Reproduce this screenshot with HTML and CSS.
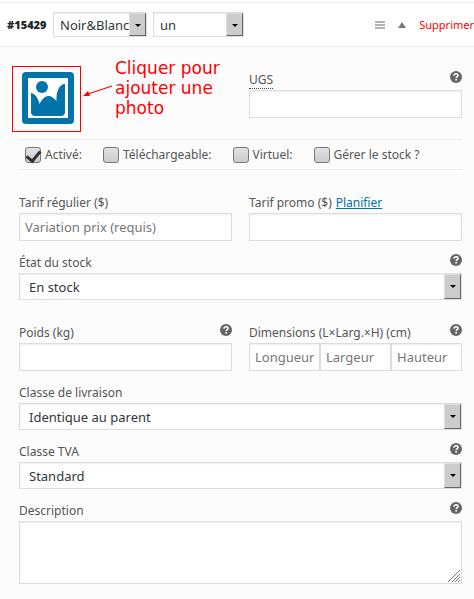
FILE: index.html
```html
<!DOCTYPE html>
<html lang="fr">

<head>
    <meta charset="UTF-8">
    <meta name="viewport" content="width=device-width, initial-scale=1.0">
    <title>Variation #15429</title>
    <link rel="stylesheet" href="styles.css">
</head>

<body>
    <svg class="sprite" aria-hidden="true">
        <symbol id="help" viewBox="0 0 12 12">
            <circle cx="6" cy="6" r="6" fill="#666"/>
            <path d="M4 4.7C4 3.3 4.9 2.8 6 2.8s2 .6 2 1.6C8 5.7 6.2 5.5 6.2 7" fill="none" stroke="#fff" stroke-width="1.5"/>
            <rect x="5.3" y="7.9" width="1.7" height="1.6" fill="#fff"/>
        </symbol>
    </svg>

    <div class="variation">
        <header class="variation-header">
            <strong>#15429</strong>
            <span class="select select-small">
                <select aria-label="Couleur">
                    <option>Noir&amp;Blanc</option>
                </select>
            </span>
            <span class="select select-small">
                <select aria-label="Quantité">
                    <option>un</option>
                </select>
            </span>
            <div class="actions">
                <svg class="icon-sort" viewBox="0 0 10 8" aria-hidden="true">
                    <path d="M0 1h10M0 4h10M0 7h10" stroke="#999" stroke-width="1.5"/>
                </svg>
                <svg class="icon-toggle" viewBox="0 0 8 6" aria-hidden="true">
                    <path d="M4 0l4 6H0z" fill="#777"/>
                </svg>
                <a class="delete" href="#">Supprimer</a>
            </div>
        </header>

        <form class="variation-data">
            <div class="row row-top">
                <div class="upload">
                    <button type="button" class="upload-btn" aria-label="Ajouter une photo">
                        <svg viewBox="0 0 52 52" aria-hidden="true">
                            <rect width="52" height="52" rx="4" fill="#0073aa"/>
                            <rect x="6" y="6" width="40" height="40" fill="#fff"/>
                            <circle cx="20" cy="15" r="6" fill="#0073aa"/>
                            <path d="M9 21c4 0 7 5 8.500 11C20 27 23 24 26.500 24c3 0 5.500 2 8 5C34 20 37 12 43 12v28q0 4-4 4H13q-4 0-4-4z" fill="#0073aa"/>
                        </svg>
                    </button>
                    <span class="frame"></span>
                    <svg class="arrow" viewBox="0 0 30 14" aria-hidden="true">
                        <path d="M29 2L5 10" stroke="#f00" stroke-width="1.2"/>
                        <path d="M0 12l5-5 2 5z" fill="#f00"/>
                    </svg>
                    <p class="note">Cliquer pour ajouter une photo</p>
                </div>
                <div class="field">
                    <div class="field-label">
                        <label for="sku"><abbr title="Unité de gestion de stock">UGS</abbr></label>
                        <svg class="help"><use href="#help"/></svg>
                    </div>
                    <input type="text" id="sku">
                </div>
            </div>

            <div class="options">
                <label><input type="checkbox" checked>Activé:</label>
                <label><input type="checkbox">Téléchargeable:</label>
                <label><input type="checkbox">Virtuel:</label>
                <label><input type="checkbox">Gérer le stock ?</label>
            </div>

            <div class="row">
                <div class="field">
                    <div class="field-label"><label for="price">Tarif régulier ($)</label></div>
                    <input type="text" id="price" placeholder="Variation prix (requis)">
                </div>
                <div class="field">
                    <div class="field-label"><label for="sale">Tarif promo ($)</label><a href="#">Planifier</a></div>
                    <input type="text" id="sale">
                </div>
            </div>

            <div class="field">
                <div class="field-label">
                    <label for="stock">État du stock</label>
                    <svg class="help"><use href="#help"/></svg>
                </div>
                <span class="select">
                    <select id="stock">
                        <option>En stock</option>
                    </select>
                </span>
            </div>

            <div class="row row-shipping">
                <div class="field">
                    <div class="field-label">
                        <label for="weight">Poids (kg)</label>
                        <svg class="help"><use href="#help"/></svg>
                    </div>
                    <input type="text" id="weight">
                </div>
                <div class="field">
                    <div class="field-label">
                        <label for="length">Dimensions (L×Larg.×H) (cm)</label>
                        <svg class="help"><use href="#help"/></svg>
                    </div>
                    <div class="dimensions">
                        <input type="text" id="length" placeholder="Longueur">
                        <input type="text" aria-label="Largeur" placeholder="Largeur">
                        <input type="text" aria-label="Hauteur" placeholder="Hauteur">
                    </div>
                </div>
            </div>

            <div class="field">
                <div class="field-label"><label for="shipping">Classe de livraison</label></div>
                <span class="select">
                    <select id="shipping">
                        <option>Identique au parent</option>
                    </select>
                </span>
            </div>

            <div class="field">
                <div class="field-label">
                    <label for="tax">Classe TVA</label>
                    <svg class="help"><use href="#help"/></svg>
                </div>
                <span class="select">
                    <select id="tax">
                        <option>Standard</option>
                    </select>
                </span>
            </div>

            <div class="field">
                <div class="field-label">
                    <label for="description">Description</label>
                    <svg class="help"><use href="#help"/></svg>
                </div>
                <div class="textarea">
                    <textarea id="description"></textarea>
                    <svg class="grip" viewBox="0 0 12 12" aria-hidden="true">
                        <path d="M0 12L12 0M4 12l8-8M7 12l5-5M10 12l2-2" stroke="#777"/>
                    </svg>
                </div>
            </div>
        </form>
    </div>
</body>

</html>
```
FILE: styles.css
```css
* {
    box-sizing: border-box;
}

body {
    margin: 0;
    background: #fcfcfc;
    color: #555;
    font-family: "Noto Sans", "Open Sans", sans-serif;
    font-size: 12px;
}

.sprite {
    display: none;
}

.variation {
    padding-top: 2px;
    background: #fff;
}

/* Header */
.variation-header {
    display: flex;
    align-items: center;
    gap: 6px;
    height: 45px;
    padding-left: 7px;
    border-top: 1px solid #eee;
    border-bottom: 1px solid #eee;
    font-size: 11px;
}

.variation-header strong {
    flex: none;
    width: 40px;
    color: #222;
    font-family: "Open Sans", sans-serif;
    font-weight: 800;
    white-space: nowrap;
}

.actions {
    display: flex;
    flex: none;
    align-items: center;
    gap: 13px;
    margin-left: auto;
}

.icon-sort {
    flex: none;
    width: 10px;
    height: 8px;
}

.icon-toggle {
    flex: none;
    width: 8px;
    height: 6px;
}

.delete {
    color: #f00;
    text-decoration: none;
    white-space: nowrap;
}

/* Form */
.variation-data {
    display: flex;
    flex-direction: column;
    gap: 12px;
    padding: 23px 12px 16px 19px;
    background: #fcfcfc;
}

.row {
    display: grid;
    grid-template-columns: 1fr 1fr;
    gap: 17px;
}

.row-shipping {
    margin-top: 11px;
}

.field {
    min-width: 0;
}

.field-label {
    display: flex;
    align-items: center;
    gap: 4px;
    height: 20px;
    padding-bottom: 2px;
    white-space: nowrap;
}

.field-label a {
    color: #0073aa;
}

abbr {
    text-decoration: none;
    border-bottom: 1px dotted #444;
}

.help {
    width: 12px;
    height: 12px;
    margin: 0 0 4px auto;
}

input[type="text"],
select,
textarea {
    display: block;
    width: 100%;
    height: 28px;
    margin: 0;
    padding: 0 6px;
    border: 1px solid #ddd;
    border-radius: 0;
    background: #fff;
    box-shadow: inset 0 1px 2px rgba(0, 0, 0, 0.07);
    color: #32373c;
    font-family: inherit;
    font-size: 13px;
}

input[type="text"] {
    padding: 0 5px;
}

input::placeholder {
    color: #777;
    opacity: 1;
}

/* Drop-down with a raised grey arrow button */
.select {
    display: block;
    position: relative;
}

.select select {
    height: 27px;
    padding: 0 17px 0 9px;
    appearance: none;
}

.select::before {
    content: "";
    position: absolute;
    top: 1px;
    right: 1px;
    bottom: 1px;
    width: 15px;
    border: 1px solid #ddd;
    border-right-color: #666;
    border-bottom-color: #666;
    background: #ccc;
    pointer-events: none;
}

.select::after {
    content: "";
    position: absolute;
    top: 12px;
    right: 6px;
    border: 3px solid transparent;
    border-top-color: #000;
    border-bottom: 0;
    pointer-events: none;
}

.select-small {
    flex: none;
    width: 94px;
}

.select-small + .select-small {
    width: 91px;
}

.select-small select {
    height: 25px;
    padding-left: 6px;
}

/* Image upload */
.upload {
    position: relative;
}

.upload-btn {
    display: block;
    width: 52px;
    height: 52px;
    margin: 2px 3px 3px;
    padding: 0;
    border: 0;
    background: none;
    cursor: pointer;
}

.upload-btn svg {
    display: block;
}

.frame {
    position: absolute;
    top: -4px;
    left: -7px;
    width: 69px;
    height: 66px;
    border: 1px solid #f00;
}

.arrow {
    position: absolute;
    top: 14px;
    left: 64px;
    width: 30px;
    height: 14px;
}

.note {
    position: absolute;
    top: -12px;
    left: 96px;
    width: 120px;
    margin: 0;
    color: #f00;
    font-family: "DejaVu Sans", sans-serif;
    font-size: 17px;
    line-height: 20px;
}

/* Checkboxes */
.options {
    display: flex;
    gap: 21px;
    height: 31px;
    margin-bottom: 11px;
    padding-left: 6px;
    border-top: 1px solid #eee;
    border-bottom: 1px solid #eee;
}

.options label {
    display: flex;
    align-items: center;
    gap: 4px;
    white-space: nowrap;
}

.options input {
    display: flex;
    justify-content: center;
    width: 16px;
    height: 16px;
    margin: 0;
    border: 1px solid #777;
    border-radius: 3px;
    background: linear-gradient(#e2e2e2, #ccc);
    appearance: none;
}

.options input:checked::before {
    content: "";
    width: 6px;
    height: 11px;
    border: solid #333;
    border-width: 0 3px 3px 0;
    transform: rotate(40deg);
}

.dimensions {
    display: flex;
}

.textarea {
    position: relative;
}

textarea {
    height: 63px;
    resize: none;
}

.grip {
    position: absolute;
    right: 2px;
    bottom: 2px;
    width: 12px;
    height: 12px;
}
```
